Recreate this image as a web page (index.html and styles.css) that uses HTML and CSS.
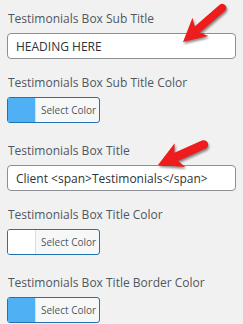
FILE: index.html
```html
<!DOCTYPE html>
<html lang="en">
<head>
    <meta charset="UTF-8">
    <meta name="viewport" content="width=device-width, initial-scale=1.0">
    <title>Testimonials Settings</title>
    <link rel="stylesheet" href="styles.css">
</head>
<body>
    <div class="settings">
        <div class="field">
            <label for="subTitle">Testimonials Box Sub Title</label>
            <input type="text" id="subTitle" value="HEADING HERE">
        </div>
        <div class="field color-field">
            <label>Testimonials Box Sub Title Color</label>
            <button class="color-btn"><span class="swatch blue"></span><span class="btn-text">Select Color</span></button>
        </div>
        <div class="field">
            <label for="boxTitle">Testimonials Box Title</label>
            <input type="text" id="boxTitle" value="Client <span>Testimonials</span>">
        </div>
        <div class="field color-field">
            <label>Testimonials Box Title Color</label>
            <button class="color-btn"><span class="swatch white"></span><span class="btn-text">Select Color</span></button>
        </div>
        <div class="field color-field">
            <label>Testimonials Box Title Border Color</label>
            <button class="color-btn"><span class="swatch blue"></span><span class="btn-text">Select Color</span></button>
        </div>
    </div>

    <svg class="arrows" width="243" height="324" viewBox="0 0 243 324">
        <path transform="translate(183 42) rotate(-41)" d="M0 0 L23 -12 L19 -4 L52 -4 A4 4 0 0 1 52 4 L19 4 L23 12 Z"/>
        <path transform="translate(158 165) rotate(-24)" d="M0 0 L24 -13 L20 -4.5 L50 -4.5 A4.5 4.5 0 0 1 50 4.5 L20 4.5 L24 13 Z"/>
    </svg>
</body>
</html>
```

FILE: styles.css
```css
body {
    margin: 0;
    padding: 0;
    background-color: #f1f1f1;
    font-family: 'Open Sans', 'Noto Sans', sans-serif;
    color: #50575e;
}

.settings {
    padding: 10px 7px 0 7px;
}

.field {
    margin-bottom: 15px;
}

.field.color-field {
    margin-bottom: 19px;
}

.field:last-child {
    margin-bottom: 0;
}

.field label {
    display: block;
    padding-left: 1px;
    font-size: 12px;
    line-height: 17px;
    margin-bottom: 6px;
}

.field input[type="text"] {
    box-sizing: border-box;
    width: 229px;
    height: 26px;
    margin: 0;
    padding: 0 8px;
    border: 1px solid #8c8f94;
    border-radius: 4px;
    background-color: #fff;
    font-family: 'Open Sans', 'Noto Sans', sans-serif;
    font-size: 12px;
    color: #2c3338;
}

.color-btn {
    display: flex;
    align-items: stretch;
    box-sizing: border-box;
    width: 93px;
    height: 26px;
    margin: 0;
    padding: 0;
    border: 1px solid #2271b1;
    border-radius: 3px;
    background-color: #f6f7f7;
    overflow: hidden;
    cursor: pointer;
}

.swatch {
    flex: 0 0 27px;
    border-right: 1px solid #dcdcde;
}

.swatch.blue {
    background-color: #4fb1f3;
}

.swatch.white {
    background-color: #fff;
}

.btn-text {
    display: flex;
    align-items: center;
    padding-left: 5px;
    white-space: nowrap;
    font-family: 'Open Sans', 'Noto Sans', sans-serif;
    font-size: 10px;
    color: #50575e;
}

.arrows {
    position: absolute;
    top: 0;
    left: 0;
    pointer-events: none;
    fill: #ee1c1c;
    filter: drop-shadow(1px 2px 1px rgba(0, 0, 0, 0.45));
}
```
